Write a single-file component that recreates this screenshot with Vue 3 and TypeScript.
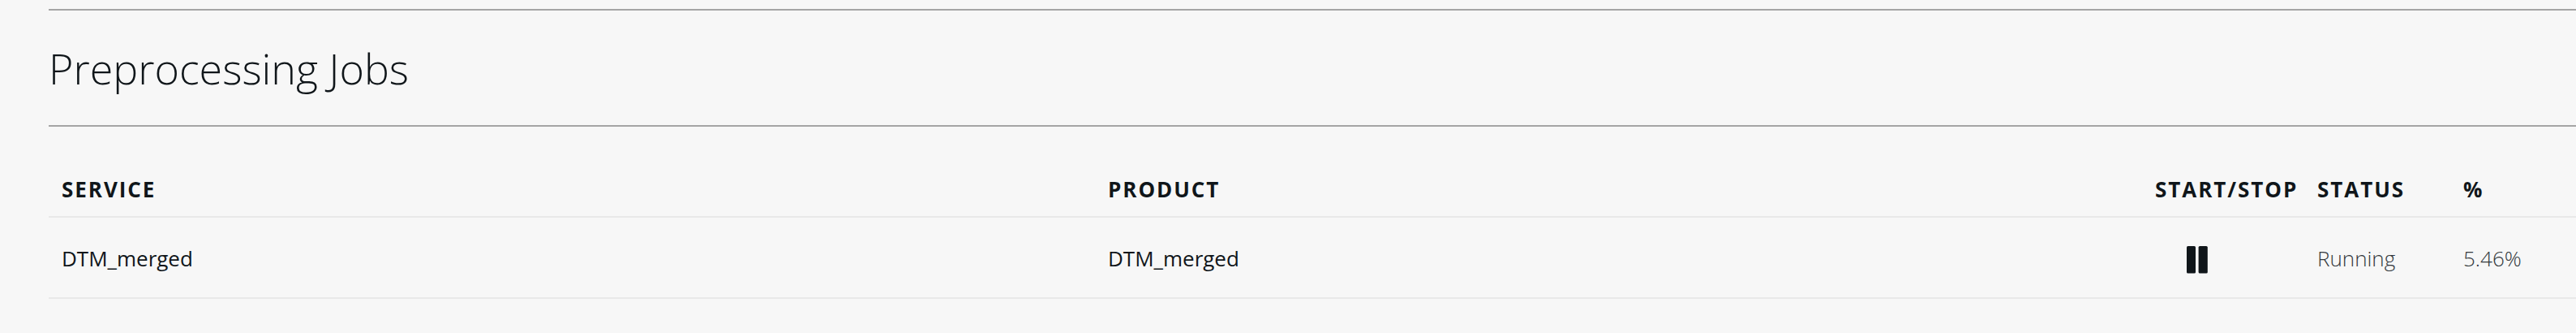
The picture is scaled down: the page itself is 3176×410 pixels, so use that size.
<script setup lang="ts">
interface Job { service: string; product: string; status: string; percent: string }
const columns: string[] = ['Service', 'Product', 'Start/Stop', 'Status', '%']
const jobs: Job[] = [{ service: 'DTM_merged', product: 'DTM_merged', status: 'Running', percent: '5.46%' }]
</script>

<template>
  <main class="page">
    <header class="heading"><h1>Preprocessing Jobs</h1></header>
    <section class="table">
      <div class="row head">
        <span v-for="c in columns" :key="c">{{ c }}</span>
      </div>
      <div v-for="j in jobs" :key="j.service" class="row body">
        <span>{{ j.service }}</span>
        <span>{{ j.product }}</span>
        <span class="action">
          <svg width="26" height="34" viewBox="0 0 26 34"><rect width="11" height="33.6" rx="1.6" /><rect x="14.6" width="11.2" height="33.6" rx="1.6" /></svg>
        </span>
        <span class="light">{{ j.status }}</span>
        <span class="light">{{ j.percent }}</span>
      </div>
    </section>
  </main>
</template>

<style>
body { background: #f7f7f7; }
</style>
<style scoped>
.page { box-sizing: border-box; height: 410px; padding: 11px 0 0 60px; background: #f7f7f7; color: #10161a; font-family: "Open Sans", sans-serif; overflow: hidden; }
.heading { box-sizing: border-box; height: 145px; border-top: 2px solid #a5a5a5; border-bottom: 2px solid #a5a5a5; display: flex; align-items: center; }
h1 { margin: 0; font-size: 52px; line-height: 71px; font-weight: 300; }
.table { padding-top: 44px; }
.row { display: grid; grid-template-columns: 1290px 1291px 200px 180px 1fr; box-sizing: border-box; padding-left: 16px; border-bottom: 2px solid #e9e9e9; align-items: center; font-size: 26px; line-height: 36px; white-space: nowrap; }
.head { height: 68px; font-weight: 700; letter-spacing: 1.95px; text-transform: uppercase; }
.body { height: 100px; padding-top: 2px; }
.action { padding: 4px 0 0 39px; display: flex; }
.action svg { fill: #10161a; }
.light { font-weight: 300; color: #34393d; }
</style>
